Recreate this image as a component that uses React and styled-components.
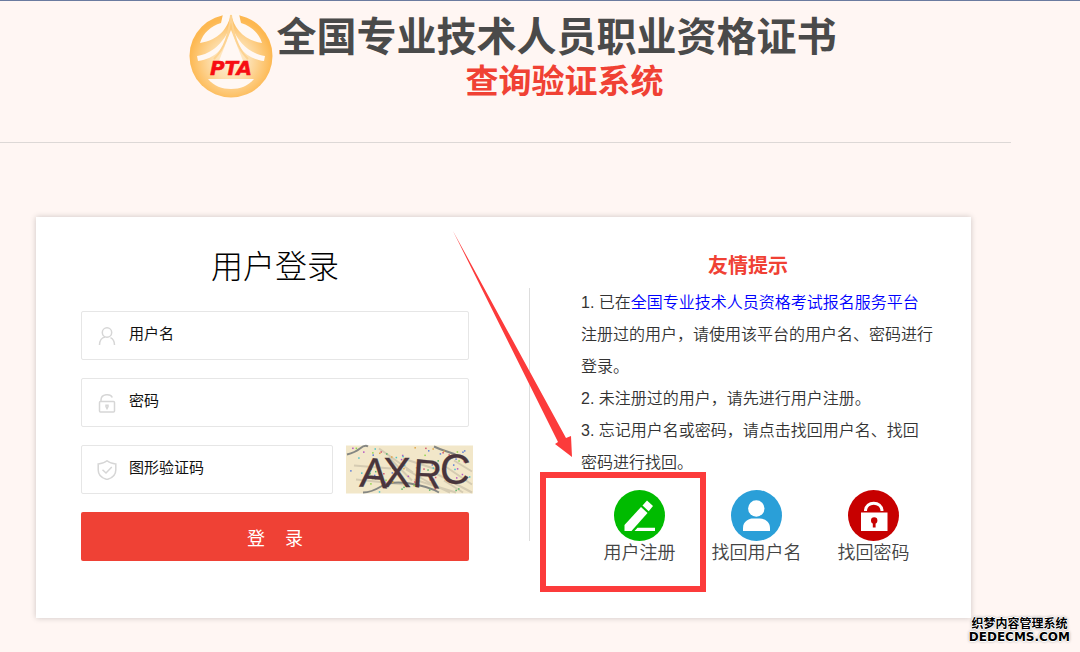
import React from "react";
import styled, { createGlobalStyle } from "styled-components";

const GlobalStyle = createGlobalStyle`
  * {
    box-sizing: border-box;
  }
  body {
    margin: 0;
    background-color: #fff6f3;
    font-family: "Liberation Sans", "Noto Sans CJK SC", sans-serif;
    color: #333;
  }
`;

const dotColors = ["#5a7bd8", "#d2566e", "#58b46a", "#b455c4", "#4cc2c9", "#8fd64a", "#e0a548"];
const scatter = (n) => {
  const v = Math.sin(n) * 43758.5453;
  return v - Math.floor(v);
};
const dots = Array.from({ length: 85 }, (_, i) => ({
  x: 4 + scatter(i + 1) * 120,
  y: 1 + scatter(i + 200) * 45,
  color: dotColors[i % dotColors.length],
}));

function Logo() {
  return (
    <LogoSvg viewBox="0 0 84 84" role="img" aria-label="PTA">
      <defs>
        <radialGradient id="gold" cx="50%" cy="55%" r="50%">
          <stop offset="0" stopColor="#fff1dc" />
          <stop offset="0.45" stopColor="#fddfae" />
          <stop offset="1" stopColor="#fdb851" />
        </radialGradient>
      </defs>
      <circle cx="42" cy="42" r="41.5" fill="url(#gold)" />
      <g fill="#fff8f4">
        <path d="M11 29C14 19 22 12 32 9L34 0H42C39 14 30 26 11 29Z" />
        <path d="M73 29C70 19 62 12 52 9L50 0H42C45 14 54 26 73 29Z" />
        <path d="M8 42C23 40 35 28 40 15C38 33 26 45 9 47Z" />
        <path d="M76 42C61 40 49 28 44 15C46 33 58 45 75 47Z" />
        <path d="M42 16L30 47H54Z" />
        <path d="M19 65H65C59 72 51 75 42 75S25 72 19 65Z" />
      </g>
      <path d="M42 1C40 20 36 34 25 45M42 1C44 20 48 34 59 45" fill="none" stroke="#fdd391" strokeWidth="2" />
      <text x="42" y="61" textAnchor="middle" fontFamily="DejaVu Sans" fontSize="20" fontWeight="bold" fontStyle="italic" fill="#f70d12" stroke="#f70d12" strokeWidth="0.5">
        PTA
      </text>
    </LogoSvg>
  );
}

function Captcha() {
  return (
    <CaptchaSvg viewBox="0 0 127 48" role="img" aria-label="图形验证码">
      <rect width="127" height="48" fill="#f2e7c9" />
      <g fill="none" stroke="#d5cbb2" strokeWidth="2">
        <path d="M8 20L45 23M10 34L58 39M33 3L67 27M43 12L66 35M57 13L94 25M60 24L92 42M68 34L110 47M90 28L126 47M98 20L126 39M83 37L104 47M98 35L117 47M108 15L126 26" />
      </g>
      <g fill="none" stroke="#858783" strokeWidth="2">
        <path d="M1 9Q9 7 14 3T22 1M88 1Q94 4 101 6T113 11M17 47Q25 47 35 41T64 38T93 47" />
      </g>
      {dots.map((dot, i) => (
        <rect key={i} x={dot.x} y={dot.y} width="1.5" height="1.5" fill={dot.color} />
      ))}
      <g fill="#49353c" stroke="#49353c" strokeWidth="0.3" fontFamily="Liberation Sans">
        <text x="14" y="42" fontSize="42" transform="rotate(4 28 28)">A</text>
        <text x="37" y="41" fontSize="42">X</text>
        <text x="67" y="42" fontSize="40" transform="rotate(4 78 28)">R</text>
        <text x="94" y="38" fontSize="42" transform="rotate(4 109 22)">C</text>
      </g>
    </CaptchaSvg>
  );
}

function App() {
  return (
    <Page>
      <GlobalStyle />
      <Header>
        <Logo />
        <Heading>
          <SiteName>全国专业技术人员职业资格证书</SiteName>
          <SystemName>查询验证系统</SystemName>
        </Heading>
      </Header>
      <Card>
        <Login onSubmit={(e) => e.preventDefault()}>
          <LoginTitle>用户登录</LoginTitle>
          <Field>
            <FieldIcon viewBox="0 0 20 20">
              <circle cx="10" cy="6.5" r="4.7" />
              <path d="M2.5 19C2.5 14.5 5 11.5 8 11M13.5 11.7C16 13 17.5 15.5 17.5 19" />
            </FieldIcon>
            <Input type="text" placeholder="用户名" aria-label="用户名" />
          </Field>
          <Field>
            <FieldIcon viewBox="0 0 20 20">
              <rect x="2.5" y="8.5" width="15" height="10.5" rx="1" />
              <path d="M4 8.5V7C4 .5 13.5 .3 15.3 4.5M9 12.2H11V13.5L10 15.5L9 13.5Z" />
            </FieldIcon>
            <Input type="password" placeholder="密码" aria-label="密码" />
          </Field>
          <CodeRow>
            <Field>
              <FieldIcon viewBox="0 0 20 20">
                <path d="M10 .8C7.5 3 4.5 3.8 1.2 4V10C1.2 15 5.5 18.3 10 19.5C14.5 18.3 18.8 15 18.8 10V4C15.5 3.8 12.5 3 10 .8Z" />
                <path d="M5.5 9.8L9 13L14.8 7" />
              </FieldIcon>
              <Input type="text" placeholder="图形验证码" aria-label="图形验证码" />
            </Field>
            <Captcha />
          </CodeRow>
          <Submit type="submit">
            <span>登</span>
            <span>录</span>
          </Submit>
        </Login>
        <Divider />
        <Tips>
          <TipsTitle>友情提示</TipsTitle>
          <TipsText>
            1. 已在<a href="#platform">全国专业技术人员资格考试报名服务平台</a>
            <br />
            注册过的用户，请使用该平台的用户名、密码进行
            <br />
            登录。
          </TipsText>
          <TipsText>2. 未注册过的用户，请先进行用户注册。</TipsText>
          <TipsText>
            3. 忘记用户名或密码，请点击找回用户名、找回
            <br />
            密码进行找回。
          </TipsText>
          <Actions>
            <Action href="#register">
              <ActionIcon viewBox="0 0 51 51">
                <circle cx="25.5" cy="25.5" r="25.5" fill="#00bb00" />
                <path d="M10.5 41V35L27 17L33.5 23L17.5 41Z" fill="#fff" />
                <path d="M28.5 15.5L33 10.5L39 16L34.7 21.3Z" fill="#fff" />
                <path d="M20.5 41L23.5 37.7H41V41Z" fill="#fff" />
              </ActionIcon>
              用户注册
            </Action>
            <Action href="#find-name">
              <ActionIcon viewBox="0 0 51 51">
                <circle cx="25.5" cy="25.5" r="25.5" fill="#2a9fd8" />
                <circle cx="25.3" cy="18.5" r="8.2" fill="#fff" />
                <path d="M12 41V38C12 31 18 28.5 22 28.5H29C34 28.5 39 32 39 38V41Z" fill="#fff" />
              </ActionIcon>
              找回用户名
            </Action>
            <Action href="#find-password">
              <ActionIcon viewBox="0 0 51 51">
                <circle cx="25.5" cy="25.5" r="25.5" fill="#c70000" />
                <path d="M17.5 21C17.5 10.5 34 10.5 34 21" fill="none" stroke="#fff" strokeWidth="3" />
                <rect x="13" y="22.5" width="26.5" height="18.5" fill="#fff" />
                <circle cx="26.2" cy="30.5" r="3.2" fill="#c70000" />
                <path d="M24.8 31H27.6V37.5H24.8Z" fill="#c70000" />
              </ActionIcon>
              找回密码
            </Action>
          </Actions>
          <Arrow viewBox="0 0 120 227">
            <path d="M0 0L113 207L118 205L119 226L102 213L105 211Z" fill="#fc3b3b" />
          </Arrow>
          <Highlight />
        </Tips>
      </Card>
      <Watermark>
        <strong>织梦内容管理系统</strong>
        <small>DEDECMS.COM</small>
      </Watermark>
    </Page>
  );
}

export default App;

const Page = styled.div`
  position: relative;
  min-height: 100vh;
  padding-right: 69px;
  padding-bottom: 33px;
  border-top: 1px solid #6b7b9f;
`;

const Header = styled.header`
  display: flex;
  justify-content: center;
  height: 142px;
  padding: 13px 0 0 14px;
  border-bottom: 1px solid #ddd8d6;
`;

const LogoSvg = styled.svg`
  width: 84px;
  height: 84px;
  margin-right: 4px;
`;

const Heading = styled.div`
  text-align: center;
`;

const SiteName = styled.h1`
  margin: 0;
  font-size: 40px;
  line-height: 46px;
  color: #4a4a4a;
`;

const SystemName = styled.h2`
  margin: 0;
  padding-left: 16px;
  font-size: 33px;
  line-height: 44px;
  color: #f04134;
`;

const Card = styled.main`
  display: grid;
  grid-template-columns: 493fr 1px 441fr;
  margin: 74px 40px 0 36px;
  padding-bottom: 53px;
  background-color: #fff;
  box-shadow: 0 0 6px rgba(0, 0, 0, 0.2);
`;

const Login = styled.form`
  display: flex;
  flex-direction: column;
  gap: 18px;
  padding: 24px 60px 0 45px;
`;

const LoginTitle = styled.h3`
  margin: 0;
  font-size: 32px;
  font-weight: 300;
  line-height: 52px;
  text-align: center;
  color: #000;
`;

const Field = styled.label`
  display: flex;
  align-items: center;
  height: 49px;
  padding: 0 15px;
  border: 1px solid #e6e6e6;
  border-radius: 2px;
`;

const FieldIcon = styled.svg`
  width: 20px;
  height: 20px;
  flex: none;
  fill: none;
  stroke: #d6d6d6;
  stroke-width: 1.5;
`;

const Input = styled.input`
  width: 100%;
  min-width: 0;
  height: 44px;
  padding: 0 0 4px 12px;
  border: 0;
  outline: 0;
  background: none;
  font-family: inherit;
  font-size: 15px;
  &::placeholder {
    color: #111;
    opacity: 1;
  }
`;

const CodeRow = styled.div`
  display: flex;
  gap: 13px;
  margin-right: -4px;
  ${Field} {
    flex: 1;
  }
`;

const CaptchaSvg = styled.svg`
  width: 127px;
  height: 49px;
  overflow: visible;
`;

const Submit = styled.button`
  display: flex;
  align-items: center;
  justify-content: center;
  gap: 20px;
  height: 49px;
  border: 0;
  border-radius: 2px;
  background-color: #ef4135;
  font-family: inherit;
  font-size: 18px;
  color: #fff;
`;

const Divider = styled.div`
  margin: 71px 0 24px;
  background-color: #ddd;
`;

const Tips = styled.section`
  position: relative;
  padding: 33px 24px 0 51px;
`;

const TipsTitle = styled.h3`
  margin: 0 0 5px;
  padding-right: 32px;
  font-size: 20px;
  line-height: 32px;
  text-align: center;
  color: #f04134;
`;

const TipsText = styled.p`
  margin: 0;
  font-size: 16px;
  font-weight: 350;
  line-height: 32px;
  white-space: nowrap;
  a {
    color: #00f;
    text-decoration: none;
  }
`;

const Actions = styled.nav`
  display: grid;
  grid-template-columns: repeat(3, 117px);
  margin-top: 11px;
`;

const Action = styled.a`
  display: flex;
  flex-direction: column;
  align-items: center;
  font-size: 18px;
  font-weight: 350;
  line-height: 24px;
  color: #444;
  text-decoration: none;
`;

const ActionIcon = styled.svg`
  width: 51px;
  height: 51px;
`;

const Arrow = styled.svg`
  position: absolute;
  top: 14px;
  left: -77px;
  width: 120px;
  height: 227px;
  pointer-events: none;
`;

const Highlight = styled.div`
  position: absolute;
  top: 255px;
  left: 10px;
  width: 166px;
  height: 120px;
  border: 6px solid #fc3b3b;
  pointer-events: none;
`;

const Watermark = styled.footer`
  position: absolute;
  right: 10px;
  bottom: 9px;
  display: flex;
  flex-direction: column;
  align-items: center;
  color: #000;
  text-shadow: 1px 0 #fff, -1px 0 #fff, 0 1px #fff, 0 -1px #fff, 0 0 3px #555;
  strong {
    font-size: 12px;
    line-height: 14px;
  }
  small {
    font-family: "DejaVu Sans", sans-serif;
    font-size: 12px;
    font-weight: bold;
    line-height: 12px;
  }
`;
